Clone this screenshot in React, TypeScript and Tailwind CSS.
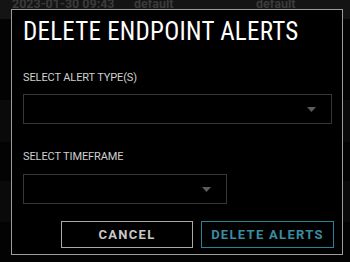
const condensed = { fontFamily: '"Roboto Condensed", "DejaVu Sans Condensed", "Liberation Sans Narrow", Roboto, sans-serif' };

function Caret() {
  return (
    <svg width="9" height="5" viewBox="0 0 9 5" className="shrink-0">
      <path d="M0 0 L9 0 L4.5 5 Z" fill="#5c5c5c" />
    </svg>
  );
}

function SelectBox({ width }: { width: string }) {
  return (
    <div className={`${width} h-[30px] border border-[#363636] bg-black flex items-center justify-end pr-[15px]`}>
      <Caret />
    </div>
  );
}

export default function App() {
  return (
    <div className="relative w-[350px] h-[262px] overflow-hidden bg-[#030303] font-['Roboto',sans-serif]">
      {/* table behind the dialog */}
      <div className="flex flex-col">
        <div className="h-[19px] bg-[#141414] flex items-end text-[#3b3b3b] text-[12.5px] font-bold leading-none">
          <div className="flex items-center h-[12px] -translate-y-[9px]">
            <span className="pl-[12px] w-[134px]">2023-01-30 09:43</span>
            <span className="w-[122px]">default</span>
            <span>default</span>
          </div>
        </div>
        <div className="h-[81px] bg-[#030303]" />
        <div className="h-[42px] bg-[#0a0a0a]" />
        <div className="h-[39px] bg-[#030303]" />
        <div className="h-[41px] bg-[#0a0a0a]" />
        <div className="h-[40px] bg-[#030303]" />
      </div>

      {/* dialog */}
      <div className="absolute left-[11px] top-[9px] w-[332px] h-[246px] border border-[#9c9c9c] bg-black px-[11px] flex flex-col">
        <h1 style={condensed} className="mt-[7px] text-[25px] leading-[30px] text-white tracking-[0.01em] whitespace-nowrap">
          DELETE ENDPOINT ALERTS
        </h1>
        <div className="mt-[24px] text-[11px] leading-[14px] tracking-[-0.01em] text-[#cfcfcf]">SELECT ALERT TYPE(S)</div>
        <div className="mt-[9px]"><SelectBox width="w-[309px]" /></div>
        <div className="mt-[26px] text-[11px] leading-[14px] tracking-[-0.01em] text-[#cfcfcf]">SELECT TIMEFRAME</div>
        <div className="mt-[10px]"><SelectBox width="w-[204px]" /></div>
        <div className="mt-[17px] -mr-[3px] flex justify-end gap-[8px]">
          <button className="w-[132px] h-[27px] border border-[#a8a8a8] text-[#c8c8c8] text-[13px] font-bold tracking-[0.1em]">
            CANCEL
          </button>
          <button className="w-[133px] h-[27px] border border-[#2a8298] text-[#3a8ca3] text-[13px] font-bold tracking-[0.1em]">
            DELETE ALERTS
          </button>
        </div>
      </div>
    </div>
  );
}
